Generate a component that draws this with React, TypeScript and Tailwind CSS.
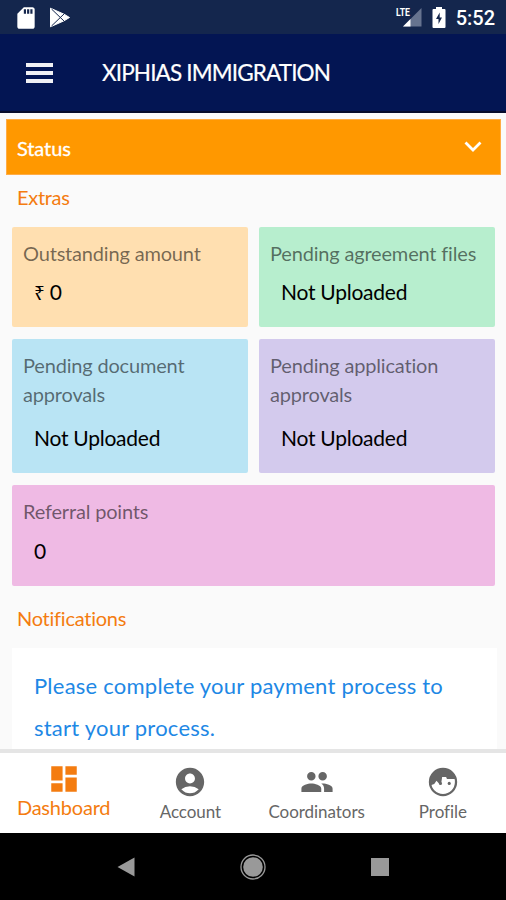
import React from 'react';
import { MdAccountCircle, MdDashboard, MdPeople, MdSdStorage } from 'react-icons/md';
import clsx from 'clsx';

interface StatCardProps {
  label: React.ReactNode;
  value: React.ReactNode;
  className: string;
}

const StatCard: React.FC<StatCardProps> = ({ label, value, className }) => (
  <div className={clsx('flex flex-col justify-between rounded-[2px] pb-[20px] pl-[11px] pt-[12px]', className)}>
    <div className="text-[20px] leading-[29px] tracking-[-0.18px] text-black/55">{label}</div>
    <div className="pl-[11px] text-[21px] leading-[30px] tracking-[-0.25px] text-black">{value}</div>
  </div>
);

const FaceIcon: React.FC<{ size: number }> = ({ size }) => (
  <svg width={size} height={size} viewBox="0 0 24 24">
    <circle cx="12" cy="12" r="9.2" fill="none" stroke="currentColor" strokeWidth="1.6" />
    <path
      d="M2.8 14.4 C1.8 7 7 2.4 12 2.4 C16.5 2.4 20.5 5.4 21.3 9.8 H14.8 L14.2 8.4 H11.4 L10.8 12.6 L9 12.8 L7.4 11.2 L5.8 13.4 Z"
      fill="currentColor"
    />
    <circle cx="10.2" cy="13" r="1.1" fill="currentColor" />
    <circle cx="16.4" cy="13" r="1.1" fill="currentColor" />
  </svg>
);

const StatusBar = () => (
  <div className="flex h-[34px] items-center bg-[#14264d] pl-[13px] pr-[11px] pt-px text-white">
    <MdSdStorage size={26} />
    <svg className="ml-[11px]" width="20" height="21" viewBox="0 0 20 21">
      <path d="M0.5 1.2 L14 7.2 L19.5 10.5 L14 13.8 L0.5 19.8 Z" fill="white" stroke="white" strokeLinejoin="round" />
      <path d="M1.5 2 L14.5 14.5 M1.5 19 L14.5 6.5" stroke="#14264d" strokeWidth="1" fill="none" />
    </svg>
    <div className="ml-auto flex items-center">
      <svg width="28" height="21" viewBox="0 0 28 21">
        <path d="M26.5 1 V19.5 H8 Z" fill="#66738f" />
        <path d="M15.5 12 V19.5 H8 Z" fill="white" />
        <text x="1" y="8.5" fill="white" fontFamily="Roboto" fontSize="11" fontWeight="700" textLength="14" lengthAdjust="spacingAndGlyphs">LTE</text>
      </svg>
      <svg className="ml-[9px]" width="14" height="21" viewBox="0 0 14 21">
        <path d="M4 0 H10 V2 H12.5 Q13.5 2 13.5 3 V20 Q13.5 21 12.5 21 H1.5 Q0.5 21 0.5 20 V3 Q0.5 2 1.5 2 H4 Z" fill="white" />
        <path d="M7.7 5.5 L4 12 H6.5 V17 L10 10.6 H7.7 Z" fill="#14264d" />
      </svg>
      <span className="ml-[10px] font-[Roboto] text-[20px] font-medium leading-none">5:52</span>
    </div>
  </div>
);

const tabs = [
  { label: 'Dashboard', icon: MdDashboard, active: true },
  { label: 'Account', icon: MdAccountCircle, active: false },
  { label: 'Coordinators', icon: MdPeople, active: false },
  { label: 'Profile', icon: FaceIcon, active: false },
];

const BottomTabs = () => (
  <div className="grid h-[84px] shrink-0 grid-cols-4 border-t-4 border-[#e5e5e5] bg-white pl-px">
    {tabs.map(({ label, icon: Icon, active }) => (
      <div
        key={label}
        className={clsx(
          'flex flex-col items-center',
          active ? 'pt-[9px] text-[#f47c10]' : 'pt-[12px] text-[#666]'
        )}
      >
        <Icon size={34} />
        <span
          className={clsx(
            'whitespace-nowrap',
            active ? 'pr-px text-[20px] leading-[22px] tracking-[-0.2px]' : 'text-[17px] leading-[25px] tracking-[-0.05px]'
          )}
        >
          {label}
        </span>
      </div>
    ))}
  </div>
);

const SystemNav = () => (
  <div className="grid h-[67px] shrink-0 grid-cols-3 items-center bg-black px-[63px]">
    <svg className="mx-auto" width="18" height="20" viewBox="0 0 18 20">
      <path d="M17.5 0.5 V19.5 L0.5 10 Z" fill="#999" />
    </svg>
    <svg className="mx-auto" width="26" height="26" viewBox="0 0 26 26">
      <circle cx="13" cy="13" r="12" fill="none" stroke="#999" strokeWidth="1.3" />
      <circle cx="13" cy="13" r="9.8" fill="#999" />
    </svg>
    <div className="mx-auto h-[18px] w-[18px] bg-[#999]" />
  </div>
);

export default function App() {
  return (
    <div className="flex h-[900px] w-[506px] flex-col overflow-hidden bg-[#fafafa] font-[Lato,sans-serif]">
      <StatusBar />
      <header className="flex h-[79px] shrink-0 items-center border-b-2 border-[#060b2b] bg-[#031553] pl-[26px] text-white">
        <div className="flex w-[27px] flex-col gap-[4px]">
          <div className="h-[4px] bg-[#f0f0f5]" />
          <div className="h-[4px] bg-[#f0f0f5]" />
          <div className="h-[4px] bg-[#f0f0f5]" />
        </div>
        <h1 className="ml-[49px] pt-px text-[22.5px] leading-none tracking-[-0.86px] [-webkit-text-stroke:0.2px_white]">
          XIPHIAS IMMIGRATION
        </h1>
      </header>

      <main className="min-h-0 flex-1 overflow-hidden">
        <div className="ml-[6px] mr-[5px] mt-[6px] flex h-[56px] items-center justify-between border border-[#ffac45] bg-[#ff9800] pl-[10px] pr-[18px] text-white">
          <span className="pt-px text-[20px] tracking-[-0.1px] [-webkit-text-stroke:0.3px_white]">Status</span>
          <svg width="18" height="12" viewBox="0 0 18 12">
            <path d="M1.5 1.5 L9 9 L16.5 1.5" fill="none" stroke="white" strokeWidth="2.8" />
          </svg>
        </div>

        <h2 className="ml-[17px] mt-[8px] text-[20px] leading-[28px] tracking-[-0.3px] text-[#f47c10]">Extras</h2>
        <div className="ml-[12px] mr-[11px] mt-[16px] grid grid-cols-2 gap-x-[11px] gap-y-[12px]">
          <StatCard
            className="h-[100px] bg-[#ffdfb0]"
            label="Outstanding amount"
            value={<><span className="font-['Noto_Sans'] text-[19px] leading-none">₹</span> 0</>}
          />
          <StatCard className="h-[100px] bg-[#b7eece]" label="Pending agreement files" value="Not Uploaded" />
          <StatCard className="h-[134px] bg-[#b9e4f4]" label={<>Pending document<br />approvals</>} value="Not Uploaded" />
          <StatCard className="h-[134px] bg-[#d3caed]" label={<>Pending application<br />approvals</>} value="Not Uploaded" />
          <StatCard className="col-span-2 h-[101px] bg-[#efbae4]" label="Referral points" value="0" />
        </div>

        <h2 className="ml-[17px] mt-[18px] text-[20px] leading-[28px] tracking-[-0.25px] text-[#f47c10]">Notifications</h2>
        <div className="ml-[12px] mr-[9px] mt-[16px] h-[120px] bg-white pl-[22px] pt-[17px] text-[22px] leading-[42px] tracking-[0.23px] text-[#1e88e5]">
          Please complete your payment process to<br />start your process.
        </div>
      </main>

      <BottomTabs />
      <SystemNav />
    </div>
  );
}
